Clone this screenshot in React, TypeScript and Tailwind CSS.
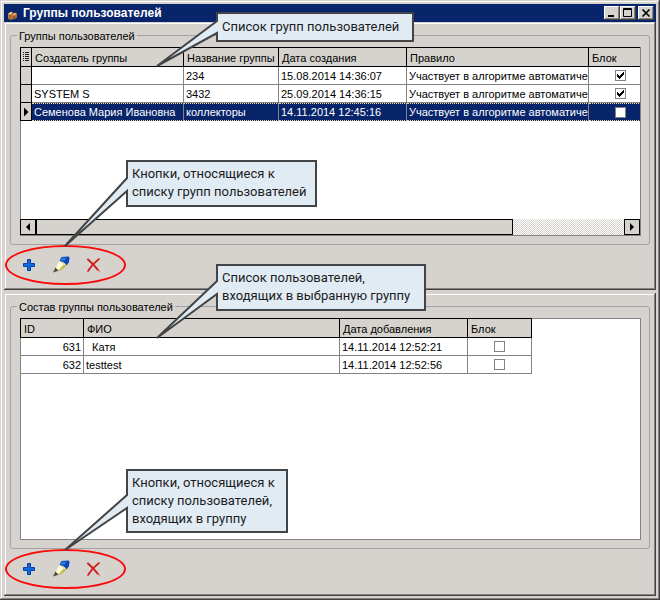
import type { ReactNode } from "react";

const raised =
  "shadow-[inset_-1px_-1px_#424142,inset_1px_1px_#d6d3ce,inset_-2px_-2px_#848284,inset_2px_2px_#ffffff]";

const th = "h-5 border-r border-b border-t border-black bg-[#d6d3ce] pt-0.5 pl-[3px] text-left font-normal";
const td = "h-[18px] overflow-hidden border-r border-b border-[#848284] px-0.5";

const rule = "Участвует в алгоритме автоматиче";

const groups = [
  { owner: "", name: "234", date: "15.08.2014 14:36:07", blocked: true, selected: false },
  { owner: "SYSTEM S", name: "3432", date: "25.09.2014 14:36:15", blocked: true, selected: false },
  { owner: "Семенова Мария Ивановна", name: "коллекторы", date: "14.11.2014 12:45:16", blocked: false, selected: true },
];

const members = [
  { id: 631, name: "  Катя", date: "14.11.2014 12:52:21" },
  { id: 632, name: "testtest", date: "14.11.2014 12:52:56" },
];

function Check({ label, checked }: { label: string; checked: boolean }) {
  return (
    <span className="grid place-items-center">
      <input
        type="checkbox"
        aria-label={label}
        defaultChecked={checked}
        className="peer col-start-1 row-start-1 size-[11px] appearance-none border border-[#848284] bg-white"
      />
      <svg
        viewBox="0 0 7 7"
        shapeRendering="crispEdges"
        className="pointer-events-none invisible col-start-1 row-start-1 size-[7px] peer-checked:visible"
      >
        <path d="M0 2h1v1h1v1h1v-1h1v-1h1v-1h1v-1h1v3h-1v1h-1v1h-1v1h-1v1h-1v-1h-1v-1h-1z" fill="#000" />
      </svg>
    </span>
  );
}

function CaptionButton({ label, children }: { label: string; children: ReactNode }) {
  return (
    <button
      type="button"
      aria-label={label}
      className="h-[14px] w-4 bg-[#d6d3ce] shadow-[inset_-1px_-1px_#424142,inset_1px_1px_#ffffff,inset_-2px_-2px_#848284]"
    >
      <svg viewBox="0 0 16 14" className="h-[14px] w-4" fill="none" stroke="#000">
        {children}
      </svg>
    </button>
  );
}

function Toolbar({ target }: { target: string }) {
  return (
    <div className="flex gap-3 pt-2.5 pb-[9px] pl-[9px]">
      <button type="button" aria-label={`Добавить: ${target}`} className="size-5">
        <svg viewBox="0 0 20 20" className="size-5">
          <path d="M8.500 4.500h3v4h4v3h-4v4h-3v-4h-4v-3h4z" fill="#0f6be0" stroke="#0a3fa8" />
        </svg>
      </button>
      <button type="button" aria-label={`Изменить: ${target}`} className="size-5">
        <svg viewBox="0 0 20 20" className="size-5">
          <path d="M8.500 5.500L15.500 10.500L11.500 14.500L3.500 17L5.500 11z" fill="#f3eda0" />
          <path d="M8.500 6.500L12 9.500L6.500 15L5 14z" fill="#fffde8" />
          <path d="M15.500 10.500L11.500 14.500L6.500 16.500L13 9.500z" fill="#c4b850" />
          <path d="M4.500 12.500L2 17.500L7.500 15.800z" fill="#4a4a42" />
          <path d="M10.500 2L18 1.500L18.500 3.500L17.800 7.500L15.500 10.500C14 7.500 11.500 6.500 8.500 6z" fill="#0a46b4" />
          <path d="M10.800 3L15.500 2.500L13.500 6L9.500 5.500z" fill="#2180e8" />
        </svg>
      </button>
      <button type="button" aria-label={`Удалить: ${target}`} className="size-5">
        <svg viewBox="0 0 20 20" className="size-5" fill="none" stroke="#d01c1c" strokeLinecap="round">
          <path d="M5 4.500C8.500 7.500 12.500 11.500 15 15" strokeWidth="2" />
          <path d="M15 15L17 16.500" strokeWidth="1" stroke="#e06060" />
          <path d="M16 4C12.500 6.500 8 11 5 16" strokeWidth="1.700" />
        </svg>
      </button>
    </div>
  );
}

function Callout({ points, box, children }: { points: string; box: string; children: ReactNode }) {
  return (
    <>
      <svg className="pointer-events-none absolute top-0 left-0 h-[600px] w-[660px]" viewBox="0 0 660 600">
        <polygon points={points} fill="#e1ebf4" stroke="#424446" strokeWidth="2" />
      </svg>
      <p className={`absolute font-['Roboto',sans-serif] text-[13px] leading-[18px] whitespace-nowrap text-[#1c1c1c] ${box}`}>
        {children}
      </p>
    </>
  );
}

function Ellipse({ place }: { place: string }) {
  return <div className={`pointer-events-none absolute left-[5px] h-10 w-[121px] rounded-[50%] border-2 border-[#f80c0c] ${place}`} />;
}

const fieldset = "flex min-w-0 flex-col rounded-[3px] border border-[#a5a2a5] pt-[5px] pr-2 pb-2 pl-[9px]";
const legend = "-ml-[3px] px-0.5 pt-0.5 leading-3";
const gridBox = "flex flex-col overflow-hidden border-r border-b border-[#848284] bg-white shadow-[inset_1px_1px_#848284]";

export default function App() {
  return (
    <div
      className={`relative flex min-h-screen flex-col bg-[#d6d3ce] p-1 font-['Liberation_Sans',sans-serif] text-[11px] leading-4 text-black ${raised}`}
    >
      <header className="flex h-[18px] items-center bg-[#08246b] pr-0.5 pl-1">
        <svg viewBox="0 0 9 9" className="mt-1 size-[9px]">
          <path d="M0 2.500L3 0.500L5 1.500V8L2 9L0 7.500z" fill="#c08048" />
          <path d="M0.500 2.500L3 1L4.500 2L2 3.500z" fill="#f4d4a0" />
          <path d="M4 3L7 1.500L9 2.500V6.500L6 8.500L4 7.500z" fill="#b06c38" />
          <path d="M4.500 3.200L7 2L8.500 3L6 4.500z" fill="#eebc80" />
          <path d="M2 4v4.500M6 5v3" stroke="#6c3c20" strokeWidth="0.800" />
        </svg>
        <h1 className="ml-1.5 text-[12px] leading-4 font-bold text-white">Группы пользователей</h1>
        <div className="ml-auto flex">
          <CaptionButton label="Свернуть">
            <path d="M4 10h6" strokeWidth="2" />
          </CaptionButton>
          <CaptionButton label="Развернуть">
            <path d="M3.500 2.500h8v8h-8z M3 3.500h9" />
          </CaptionButton>
          <span className="w-0.5" />
          <CaptionButton label="Закрыть">
            <path d="M4.500 3.500l7 7M11.500 3.500l-7 7" strokeWidth="1.700" />
          </CaptionButton>
        </div>
      </header>

      <section className={`p-1.5 ${raised}`}>
        <fieldset className={fieldset}>
          <legend className={legend}>Группы пользователей</legend>
          <div className={`h-[189px] ${gridBox}`}>
            <div className="min-h-0 flex-1 overflow-hidden">
              <table className="w-[633px] table-fixed border-separate border-spacing-0 whitespace-nowrap">
                <colgroup>
                  <col className="w-3" />
                  <col className="w-[152px]" />
                  <col className="w-[95px]" />
                  <col className="w-[128px]" />
                  <col className="w-[182px]" />
                  <col className="w-16" />
                </colgroup>
                <thead>
                  <tr>
                    <th className="h-5 border border-black bg-[#d6d3ce]" aria-label="Строка">
                      <svg viewBox="0 0 10 10" className="size-[10px]" shapeRendering="crispEdges">
                        <path d="M2 0h1v1h-1zM4 0h4v1h-4zM2 2h1v1h-1zM4 2h4v1h-4zM2 4h1v1h-1zM4 4h4v1h-4zM2 6h1v1h-1zM4 6h4v1h-4zM2 8h1v1h-1zM4 8h4v1h-4z" fill="#222" />
                      </svg>
                    </th>
                    <th className={th}>Создатель группы</th>
                    <th className={th}>Название группы</th>
                    <th className={th}>Дата создания</th>
                    <th className={th}>Правило</th>
                    <th className={th}>Блок</th>
                  </tr>
                </thead>
                <tbody>
                  {groups.map((g) => (
                    <tr
                      key={g.date}
                      className={g.selected ? "bg-[#08246b] text-white [&>td+td]:border-y [&>td+td]:border-y-[#f7db94] [&>td+td]:[border-block-style:dotted]" : ""}
                    >
                      <td className="h-[18px] border-r border-b border-l border-black bg-[#d6d3ce]">
                        {g.selected && (
                          <svg viewBox="0 0 10 10" className="size-[10px]">
                            <path d="M3 0.500L7.500 5L3 9.500z" fill="#000" />
                          </svg>
                        )}
                      </td>
                      <td className={td}>{g.owner}</td>
                      <td className={td}>{g.name}</td>
                      <td className={td}>{g.date}</td>
                      <td className={td}>{rule}</td>
                      <td className={td}>
                        <Check label={`Блок ${g.name}`} checked={g.blocked} />
                      </td>
                    </tr>
                  ))}
                </tbody>
              </table>
            </div>
            <div className="flex h-4 bg-[repeating-conic-gradient(#ffffff_0_25%,#d6d3ce_0_50%)] bg-size-[2px_2px]">
              <button type="button" aria-label="Влево" className="grid w-4 place-items-center border border-black bg-[#d6d3ce]">
                <svg viewBox="0 0 8 8" className="size-2">
                  <path d="M6 0v8L2 4z" />
                </svg>
              </button>
              <div className="w-[77%] border border-black bg-[#d6d3ce]" />
              <button type="button" aria-label="Вправо" className="ml-auto grid w-4 place-items-center border border-black bg-[#d6d3ce]">
                <svg viewBox="0 0 8 8" className="size-2">
                  <path d="M2 0v8L6 4z" />
                </svg>
              </button>
            </div>
          </div>
        </fieldset>
        <Toolbar target="группа" />
      </section>

      <section className={`mt-[3px] flex flex-1 flex-col p-1.5 ${raised}`}>
        <fieldset className={fieldset}>
          <legend className={legend}>Состав группы пользователей</legend>
          <div className={`h-[222px] ${gridBox}`}>
            <table className="w-[512px] table-fixed border-separate border-spacing-0 whitespace-nowrap">
              <colgroup>
                <col className="w-16" />
                <col className="w-64" />
                <col className="w-32" />
                <col className="w-16" />
              </colgroup>
              <thead>
                <tr>
                  <th className={`${th} border-l`}>ID</th>
                  <th className={th}>ФИО</th>
                  <th className={th}>Дата добавления</th>
                  <th className={th}>Блок</th>
                </tr>
              </thead>
              <tbody>
                {members.map((m) => (
                  <tr key={m.id}>
                    <td className={`${td} border-l text-right`}>{m.id}</td>
                    <td className={`${td} whitespace-pre`}>{m.name}</td>
                    <td className={td}>{m.date}</td>
                    <td className={td}>
                      <Check label={`Блок ${m.id}`} checked={false} />
                    </td>
                  </tr>
                ))}
              </tbody>
            </table>
          </div>
        </fieldset>
        <Toolbar target="пользователь" />
      </section>

      <Ellipse place="top-[245px]" />
      <Ellipse place="top-[549px]" />
      <Callout points="217,13 413,13 413,41 217,41 217,33 157,66 217,21" box="top-[18px] left-[222px]">
        Список групп пользователей
      </Callout>
      <Callout points="127,161 316,161 316,206 127,206 127,191 65,246 127,178" box="top-[165px] left-[132px]">
        Кнопки, относящиеся к
        <br />
        списку групп пользователей
      </Callout>
      <Callout points="217,265 425,265 425,310 217,310 217,294 157,338 217,281" box="top-[269px] left-[222px]">
        Список пользователей,
        <br />
        входящих в выбранную группу
      </Callout>
      <Callout points="127,470 287,470 287,532 127,532 127,508 65,550 127,495" box="top-[474px] left-[132px]">
        Кнопки, относящиеся к
        <br />
        списку пользователей,
        <br />
        входящих в группу
      </Callout>
    </div>
  );
}
